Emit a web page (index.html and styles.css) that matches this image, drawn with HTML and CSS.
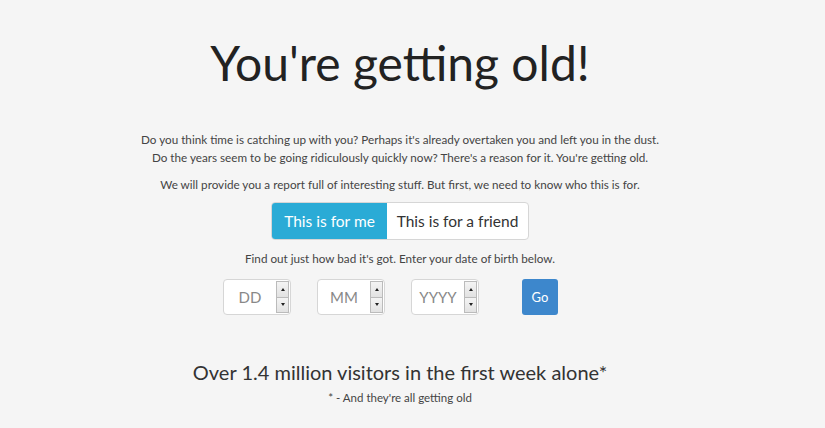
FILE: index.html
```html
<!DOCTYPE html>
<html>
<head>
<meta charset="utf-8">
<link rel="stylesheet" href="styles.css">
</head>
<body>
<main class="page">
  <h1 class="title">You're getting old!</h1>
  <p class="intro">Do you think time is catching up with you? Perhaps it's already overtaken you and left you in the dust.<br>Do the years seem to be going ridiculously quickly now? There's a reason for it. You're getting old.</p>
  <p class="intro second">We will provide you a report full of interesting stuff. But first, we need to know who this is for.</p>
  <div class="toggle">
    <span class="opt active">This is for me</span>
    <span class="opt">This is for a friend</span>
  </div>
  <p class="intro find">Find out just how bad it's got. Enter your date of birth below.</p>
  <div class="dob">
    <div class="field"><span class="ph">DD</span><span class="spin"><span class="up"></span><span class="down"></span></span></div>
    <div class="field"><span class="ph">MM</span><span class="spin"><span class="up"></span><span class="down"></span></span></div>
    <div class="field"><span class="ph">YYYY</span><span class="spin"><span class="up"></span><span class="down"></span></span></div>
    <span class="go">Go</span>
  </div>
  <h2 class="visitors">Over 1.4 million visitors in the first week alone*</h2>
  <p class="note">* - And they're all getting old</p>
</main>
</body>
</html>
```
FILE: styles.css
```css
html, body { margin: 0; padding: 0; }
body {
  background: #f5f5f5;
  font-family: Lato, "Open Sans", sans-serif;
  color: #444;
}
.page {
  width: 800px;
  display: flex;
  flex-direction: column;
  align-items: center;
  text-align: center;
}
.title {
  margin: 31px 0 0;
  font-size: 48px;
  font-weight: 400;
  color: #222;
  line-height: 64px;
}
.intro {
  margin: 35px 0 0;
  font-size: 11.7px;
  line-height: 18px;
  color: #444;
}
.intro.second { margin-top: 9px; }
.toggle {
  margin-top: 9px;
  display: flex;
  border: 1px solid #d6d6d6;
  border-radius: 4px;
  background: #fff;
  overflow: hidden;
  height: 36px;
  white-space: nowrap;
}
.opt {
  display: flex;
  align-items: center;
  justify-content: center;
  font-size: 15.5px;
  color: #333;
  width: 141px;
}
.opt.active {
  background: #2aabd6;
  color: #fff;
  width: 115px;
}
.intro.find { margin-top: 9px; }
.dob {
  margin-top: 12px;
  display: flex;
  gap: 26px;
  align-items: center;
  padding-right: 19px;
}
.field {
  width: 66px;
  height: 34px;
  border: 1px solid #d6d6d6;
  border-radius: 4px;
  background: #fff;
  display: flex;
  align-items: stretch;
}
.ph {
  flex: 1;
  display: flex;
  align-items: center;
  justify-content: center;
  font-size: 15px;
  color: #888;
}
.spin {
  width: 13px;
  display: flex;
  flex-direction: column;
  margin: 1px 1px 1px 0;
}
.up, .down {
  flex: 1;
  background: linear-gradient(#f4f4f4, #e2e2e2);
  border: 1px solid #bbb;
  position: relative;
}
.down { border-top: none; }
.up::after, .down::after {
  content: "";
  position: absolute;
  left: 4px;
  top: 6px;
  border-left: 2px solid transparent;
  border-right: 2px solid transparent;
}
.up::after { border-bottom: 3px solid #222; }
.down::after { border-top: 3px solid #222; top: 5px; }
.go {
  margin-left: 17px;
  width: 36px;
  height: 36px;
  border-radius: 3px;
  background: #3d87cc;
  color: #fff;
  font-size: 13px;
  display: flex;
  align-items: center;
  justify-content: center;
}
.visitors {
  margin: 43px 0 0;
  font-size: 20px;
  font-weight: 400;
  color: #333;
  line-height: 28px;
}
.note {
  margin: 5px 0 0;
  font-size: 11.5px;
  color: #444;
}
```
